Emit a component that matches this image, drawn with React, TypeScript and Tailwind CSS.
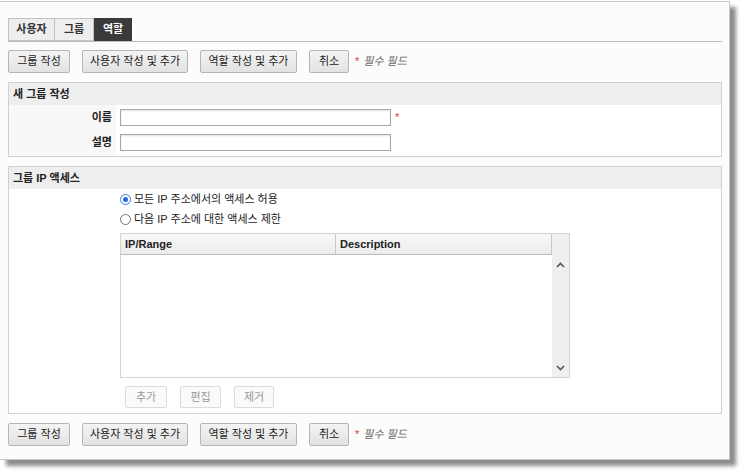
import React from "react";

const F = { fontFamily: '"Liberation Sans", "Noto Sans CJK KR", sans-serif' };

function Btn({ children, w, disabled }: { children: React.ReactNode; w: string; disabled?: boolean }) {
  return (
    <button
      className={
        disabled
          ? `${w} h-[22px] rounded-[2px] border border-[#dcdcdc] bg-[#fafafa] text-[11px] leading-none text-[#999] flex items-center justify-center`
          : `${w} h-[23px] rounded-[2px] border border-[#b5b5b5] bg-gradient-to-b from-[#f4f4f4] to-[#e2e2e2] text-[11px] leading-none text-[#222] flex items-center justify-center`
      }
    >
      {children}
    </button>
  );
}

function ButtonRow() {
  return (
    <div className="flex items-center h-[23px] overflow-hidden">
      <Btn w="w-[62px]">그룹 작성</Btn>
      <div className="w-[12px]" />
      <Btn w="w-[106px]">사용자 작성 및 추가</Btn>
      <div className="w-[12px]" />
      <Btn w="w-[97px]">역할 작성 및 추가</Btn>
      <div className="w-[12px]" />
      <Btn w="w-[40px]">취소</Btn>
      <span className="ml-[6px] text-[11px] text-[#e33] leading-none">*</span>
      <span className="ml-[4px] text-[11px] italic text-[#666] leading-none">필수 필드</span>
    </div>
  );
}

export default function App() {
  return (
    <div className="w-[745px] h-[476px] bg-white relative" style={F}>
      <div className="absolute left-0 top-[1px] w-[730px] h-[459px] bg-[#fcfcfc] border-t border-r border-b border-[#c8c8c8] shadow-[6px_6px_4px_rgba(0,0,0,0.45)]">
        <div className="pl-[8px] pr-[8px] pt-[16px]">
          {/* tabs */}
          <div className="flex h-[24px] border-b border-[#bdbdbd] w-[714px]">
            <div className="w-[47px] h-[23px] border border-[#c4c4c4] bg-[#eeeeee] text-[11px] font-bold text-[#333] flex items-center justify-center">사용자</div>
            <div className="w-[39px] h-[23px] border border-[#c4c4c4] border-l-0 bg-[#eeeeee] text-[11px] font-bold text-[#333] flex items-center justify-center">그룹</div>
            <div className="w-[38px] h-[23px] bg-[#3a3a3a] text-[11px] font-bold text-white flex items-center justify-center">역할</div>
          </div>
          <div className="mt-[8px]">
            <ButtonRow />
          </div>
          {/* section 1 */}
          <div className="mt-[9px] w-[714px] h-[75px] border border-[#d0d0d0] bg-white">
            <div className="h-[22px] bg-[#eeeeee] text-[11px] font-bold text-[#222] flex items-center pl-[4px]">새 그룹 작성</div>
            <div className="flex h-[51px]">
              <div className="w-[107px] bg-[#f8f8f8] flex flex-col items-end pr-[4px]">
                <div className="h-[25px] flex items-center text-[11px] font-bold text-[#222]">이름</div>
                <div className="h-[25px] flex items-center text-[11px] font-bold text-[#222]">설명</div>
              </div>
              <div className="flex flex-col pl-[4px]">
                <div className="h-[25px] flex items-center">
                  <div className="w-[271px] h-[17px] border border-[#a8a8a8] bg-white shadow-[inset_0_1px_2px_rgba(0,0,0,0.12)]" />
                  <span className="ml-[4px] text-[11px] text-[#e33]">*</span>
                </div>
                <div className="h-[25px] flex items-center">
                  <div className="w-[271px] h-[17px] border border-[#a8a8a8] bg-white shadow-[inset_0_1px_2px_rgba(0,0,0,0.12)]" />
                </div>
              </div>
            </div>
          </div>
          {/* section 2 */}
          <div className="mt-[9px] w-[714px] h-[248px] border border-[#d0d0d0] bg-white">
            <div className="h-[22px] bg-[#eeeeee] text-[11px] font-bold text-[#222] flex items-center pl-[4px]">그룹 IP 액세스</div>
            <div className="pl-[111px]">
              <div className="h-[20px] flex items-center text-[11px] text-[#222]">
                <span className="w-[11px] h-[11px] rounded-full border border-[#3b7de0] bg-white flex items-center justify-center mr-[3px]">
                  <span className="w-[5px] h-[5px] rounded-full bg-[#1f6fe0]" />
                </span>
                모든 IP 주소에서의 액세스 허용
              </div>
              <div className="h-[20px] flex items-center text-[11px] text-[#222]">
                <span className="w-[11px] h-[11px] rounded-full border border-[#777] bg-white mr-[3px]" />
                다음 IP 주소에 대한 액세스 제한
              </div>
              <div className="mt-[4px] w-[450px] h-[145px] border border-[#d4d4d4] flex">
                <div className="flex-1 flex flex-col">
                  <div className="h-[21px] flex bg-gradient-to-b from-[#f8f8f8] to-[#ececec] border-b border-[#bcbcbc]">
                    <div className="w-[215px] border-r border-[#c8c8c8] text-[11px] font-bold text-[#222] flex items-center pl-[4px]">IP/Range</div>
                    <div className="flex-1 border-r border-[#c8c8c8] text-[11px] font-bold text-[#222] flex items-center pl-[4px]">Description</div>
                  </div>
                  <div className="flex-1 bg-white" />
                </div>
                <div className="w-[17px] bg-[#efefef] flex flex-col items-center justify-between pt-[28px] pb-[6px]">
                  <svg width="9" height="6" viewBox="0 0 9 6"><path d="M1 5 L4.5 1.5 L8 5" stroke="#555" strokeWidth="1.6" fill="none" /></svg>
                  <svg width="9" height="6" viewBox="0 0 9 6"><path d="M1 1 L4.5 4.5 L8 1" stroke="#555" strokeWidth="1.6" fill="none" /></svg>
                </div>
              </div>
              <div className="flex mt-[8px] pl-[5px] gap-[13px]">
                <Btn w="w-[42px]" disabled>추가</Btn>
                <Btn w="w-[41px]" disabled>편집</Btn>
                <Btn w="w-[40px]" disabled>제거</Btn>
              </div>
            </div>
          </div>
          <div className="mt-[9px]">
            <ButtonRow />
          </div>
        </div>
      </div>
    </div>
  );
}
